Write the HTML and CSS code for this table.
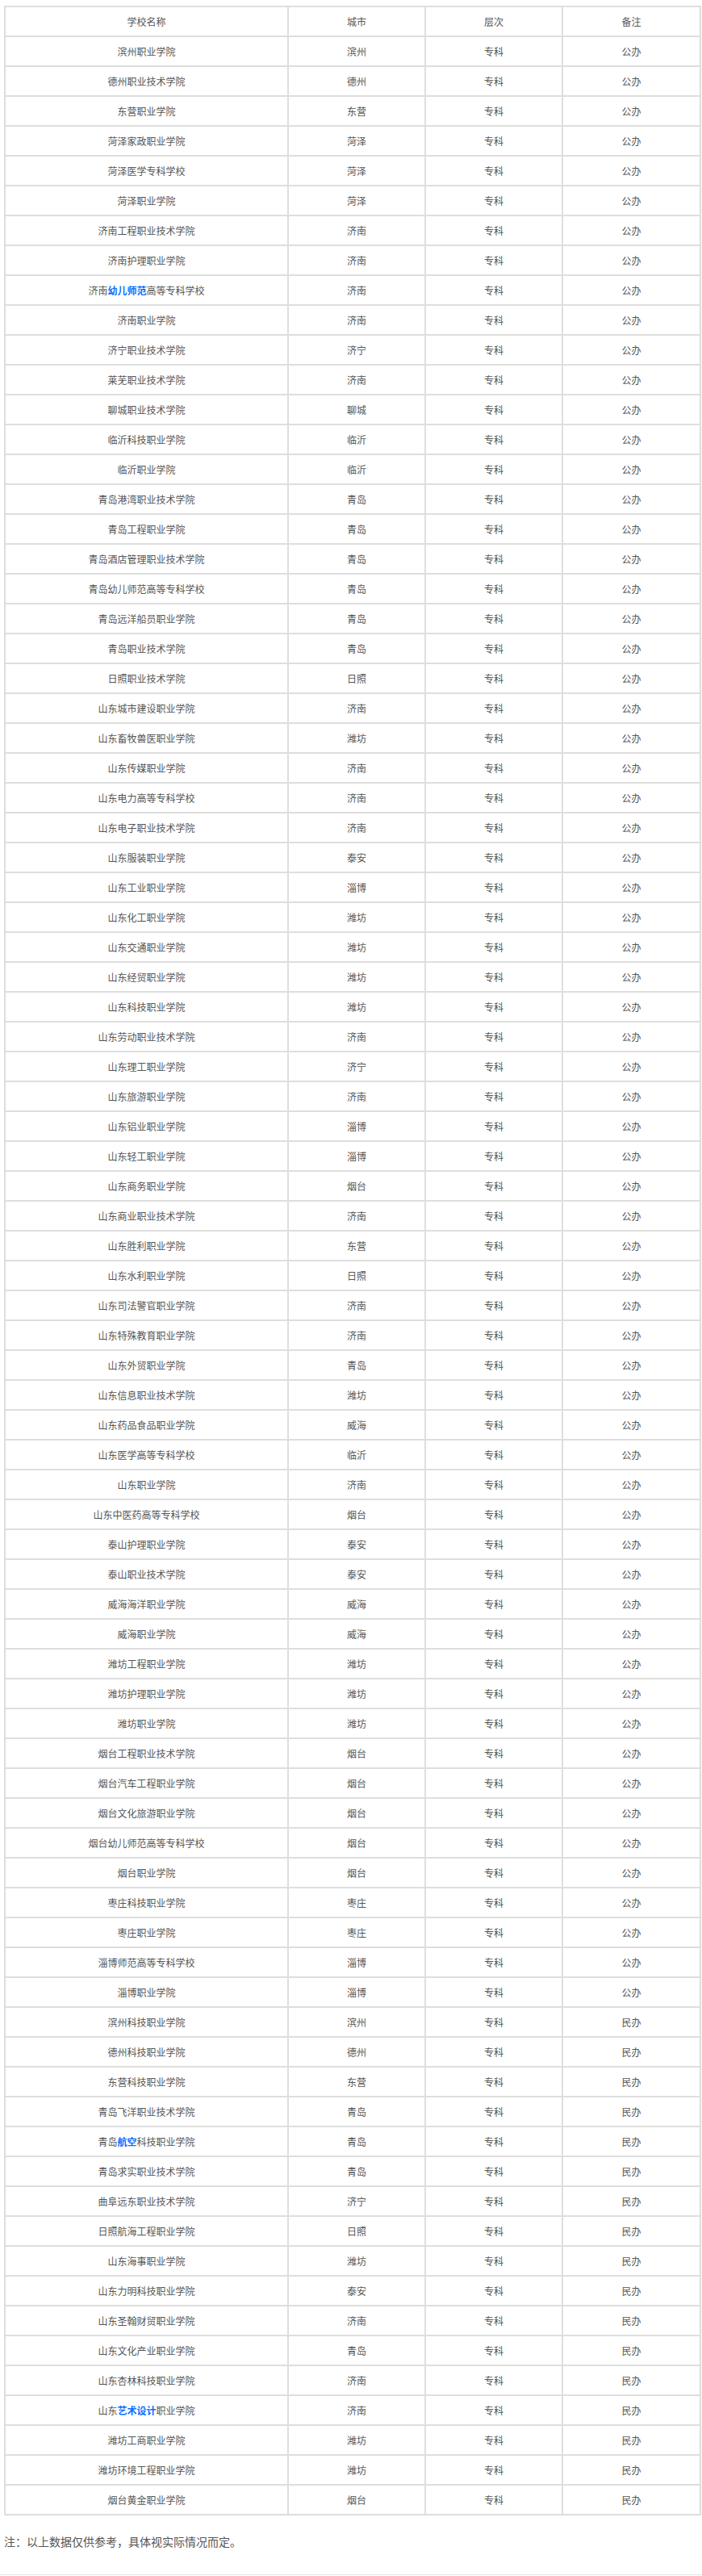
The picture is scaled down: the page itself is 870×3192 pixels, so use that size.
FILE: index.html
```html
<!DOCTYPE html>
<html lang="zh-CN">
<head>
<meta charset="utf-8">
<title>山东专科院校名单</title>
<link rel="stylesheet" href="styles.css">
</head>
<body>
<div class="article">
<table class="schools">
<colgroup><col class="c-name"><col class="c-city"><col class="c-level"><col class="c-note"></colgroup>
<tbody>
<tr><td>学校名称</td><td>城市</td><td>层次</td><td>备注</td></tr>
<tr><td>滨州职业学院</td><td>滨州</td><td>专科</td><td>公办</td></tr>
<tr><td>德州职业技术学院</td><td>德州</td><td>专科</td><td>公办</td></tr>
<tr><td>东营职业学院</td><td>东营</td><td>专科</td><td>公办</td></tr>
<tr><td>菏泽家政职业学院</td><td>菏泽</td><td>专科</td><td>公办</td></tr>
<tr><td>菏泽医学专科学校</td><td>菏泽</td><td>专科</td><td>公办</td></tr>
<tr><td>菏泽职业学院</td><td>菏泽</td><td>专科</td><td>公办</td></tr>
<tr><td>济南工程职业技术学院</td><td>济南</td><td>专科</td><td>公办</td></tr>
<tr><td>济南护理职业学院</td><td>济南</td><td>专科</td><td>公办</td></tr>
<tr><td>济南<a class="kw">幼儿师范</a>高等专科学校</td><td>济南</td><td>专科</td><td>公办</td></tr>
<tr><td>济南职业学院</td><td>济南</td><td>专科</td><td>公办</td></tr>
<tr><td>济宁职业技术学院</td><td>济宁</td><td>专科</td><td>公办</td></tr>
<tr><td>莱芜职业技术学院</td><td>济南</td><td>专科</td><td>公办</td></tr>
<tr><td>聊城职业技术学院</td><td>聊城</td><td>专科</td><td>公办</td></tr>
<tr><td>临沂科技职业学院</td><td>临沂</td><td>专科</td><td>公办</td></tr>
<tr><td>临沂职业学院</td><td>临沂</td><td>专科</td><td>公办</td></tr>
<tr><td>青岛港湾职业技术学院</td><td>青岛</td><td>专科</td><td>公办</td></tr>
<tr><td>青岛工程职业学院</td><td>青岛</td><td>专科</td><td>公办</td></tr>
<tr><td>青岛酒店管理职业技术学院</td><td>青岛</td><td>专科</td><td>公办</td></tr>
<tr><td>青岛幼儿师范高等专科学校</td><td>青岛</td><td>专科</td><td>公办</td></tr>
<tr><td>青岛远洋船员职业学院</td><td>青岛</td><td>专科</td><td>公办</td></tr>
<tr><td>青岛职业技术学院</td><td>青岛</td><td>专科</td><td>公办</td></tr>
<tr><td>日照职业技术学院</td><td>日照</td><td>专科</td><td>公办</td></tr>
<tr><td>山东城市建设职业学院</td><td>济南</td><td>专科</td><td>公办</td></tr>
<tr><td>山东畜牧兽医职业学院</td><td>潍坊</td><td>专科</td><td>公办</td></tr>
<tr><td>山东传媒职业学院</td><td>济南</td><td>专科</td><td>公办</td></tr>
<tr><td>山东电力高等专科学校</td><td>济南</td><td>专科</td><td>公办</td></tr>
<tr><td>山东电子职业技术学院</td><td>济南</td><td>专科</td><td>公办</td></tr>
<tr><td>山东服装职业学院</td><td>泰安</td><td>专科</td><td>公办</td></tr>
<tr><td>山东工业职业学院</td><td>淄博</td><td>专科</td><td>公办</td></tr>
<tr><td>山东化工职业学院</td><td>潍坊</td><td>专科</td><td>公办</td></tr>
<tr><td>山东交通职业学院</td><td>潍坊</td><td>专科</td><td>公办</td></tr>
<tr><td>山东经贸职业学院</td><td>潍坊</td><td>专科</td><td>公办</td></tr>
<tr><td>山东科技职业学院</td><td>潍坊</td><td>专科</td><td>公办</td></tr>
<tr><td>山东劳动职业技术学院</td><td>济南</td><td>专科</td><td>公办</td></tr>
<tr><td>山东理工职业学院</td><td>济宁</td><td>专科</td><td>公办</td></tr>
<tr><td>山东旅游职业学院</td><td>济南</td><td>专科</td><td>公办</td></tr>
<tr><td>山东铝业职业学院</td><td>淄博</td><td>专科</td><td>公办</td></tr>
<tr><td>山东轻工职业学院</td><td>淄博</td><td>专科</td><td>公办</td></tr>
<tr><td>山东商务职业学院</td><td>烟台</td><td>专科</td><td>公办</td></tr>
<tr><td>山东商业职业技术学院</td><td>济南</td><td>专科</td><td>公办</td></tr>
<tr><td>山东胜利职业学院</td><td>东营</td><td>专科</td><td>公办</td></tr>
<tr><td>山东水利职业学院</td><td>日照</td><td>专科</td><td>公办</td></tr>
<tr><td>山东司法警官职业学院</td><td>济南</td><td>专科</td><td>公办</td></tr>
<tr><td>山东特殊教育职业学院</td><td>济南</td><td>专科</td><td>公办</td></tr>
<tr><td>山东外贸职业学院</td><td>青岛</td><td>专科</td><td>公办</td></tr>
<tr><td>山东信息职业技术学院</td><td>潍坊</td><td>专科</td><td>公办</td></tr>
<tr><td>山东药品食品职业学院</td><td>威海</td><td>专科</td><td>公办</td></tr>
<tr><td>山东医学高等专科学校</td><td>临沂</td><td>专科</td><td>公办</td></tr>
<tr><td>山东职业学院</td><td>济南</td><td>专科</td><td>公办</td></tr>
<tr><td>山东中医药高等专科学校</td><td>烟台</td><td>专科</td><td>公办</td></tr>
<tr><td>泰山护理职业学院</td><td>泰安</td><td>专科</td><td>公办</td></tr>
<tr><td>泰山职业技术学院</td><td>泰安</td><td>专科</td><td>公办</td></tr>
<tr><td>威海海洋职业学院</td><td>威海</td><td>专科</td><td>公办</td></tr>
<tr><td>威海职业学院</td><td>威海</td><td>专科</td><td>公办</td></tr>
<tr><td>潍坊工程职业学院</td><td>潍坊</td><td>专科</td><td>公办</td></tr>
<tr><td>潍坊护理职业学院</td><td>潍坊</td><td>专科</td><td>公办</td></tr>
<tr><td>潍坊职业学院</td><td>潍坊</td><td>专科</td><td>公办</td></tr>
<tr><td>烟台工程职业技术学院</td><td>烟台</td><td>专科</td><td>公办</td></tr>
<tr><td>烟台汽车工程职业学院</td><td>烟台</td><td>专科</td><td>公办</td></tr>
<tr><td>烟台文化旅游职业学院</td><td>烟台</td><td>专科</td><td>公办</td></tr>
<tr><td>烟台幼儿师范高等专科学校</td><td>烟台</td><td>专科</td><td>公办</td></tr>
<tr><td>烟台职业学院</td><td>烟台</td><td>专科</td><td>公办</td></tr>
<tr><td>枣庄科技职业学院</td><td>枣庄</td><td>专科</td><td>公办</td></tr>
<tr><td>枣庄职业学院</td><td>枣庄</td><td>专科</td><td>公办</td></tr>
<tr><td>淄博师范高等专科学校</td><td>淄博</td><td>专科</td><td>公办</td></tr>
<tr><td>淄博职业学院</td><td>淄博</td><td>专科</td><td>公办</td></tr>
<tr><td>滨州科技职业学院</td><td>滨州</td><td>专科</td><td>民办</td></tr>
<tr><td>德州科技职业学院</td><td>德州</td><td>专科</td><td>民办</td></tr>
<tr><td>东营科技职业学院</td><td>东营</td><td>专科</td><td>民办</td></tr>
<tr><td>青岛飞洋职业技术学院</td><td>青岛</td><td>专科</td><td>民办</td></tr>
<tr><td>青岛<a class="kw">航空</a>科技职业学院</td><td>青岛</td><td>专科</td><td>民办</td></tr>
<tr><td>青岛求实职业技术学院</td><td>青岛</td><td>专科</td><td>民办</td></tr>
<tr><td>曲阜远东职业技术学院</td><td>济宁</td><td>专科</td><td>民办</td></tr>
<tr><td>日照航海工程职业学院</td><td>日照</td><td>专科</td><td>民办</td></tr>
<tr><td>山东海事职业学院</td><td>潍坊</td><td>专科</td><td>民办</td></tr>
<tr><td>山东力明科技职业学院</td><td>泰安</td><td>专科</td><td>民办</td></tr>
<tr><td>山东圣翰财贸职业学院</td><td>济南</td><td>专科</td><td>民办</td></tr>
<tr><td>山东文化产业职业学院</td><td>青岛</td><td>专科</td><td>民办</td></tr>
<tr><td>山东杏林科技职业学院</td><td>济南</td><td>专科</td><td>民办</td></tr>
<tr><td>山东<a class="kw">艺术设计</a>职业学院</td><td>济南</td><td>专科</td><td>民办</td></tr>
<tr><td>潍坊工商职业学院</td><td>潍坊</td><td>专科</td><td>民办</td></tr>
<tr><td>潍坊环境工程职业学院</td><td>潍坊</td><td>专科</td><td>民办</td></tr>
<tr><td>烟台黄金职业学院</td><td>烟台</td><td>专科</td><td>民办</td></tr>
</tbody>
</table>
<p class="note">注：以上数据仅供参考，具体视实际情况而定。</p>
<div class="rule"></div>
</div>
</body>
</html>
```
FILE: styles.css
```css
html, body {
  margin: 0;
  padding: 0;
  background: #fff;
}
body {
  font-family: "Microsoft YaHei", "Noto Sans CJK SC", "Noto Sans", sans-serif;
  color: #555;
}
.article {
  padding: 7px 3px 0 5px;
}
.schools {
  width: 862px;
  border-collapse: collapse;
  table-layout: fixed;
  font-size: 12px;
}
.c-name { width: 351px; }
.c-city { width: 170px; }
.c-level { width: 170px; }
.c-note { width: 171px; }
.schools td {
  border: 2px solid #dedede;
  height: 35px;
  padding: 0;
  line-height: 35px;
  text-align: center;
  color: #555;
  white-space: nowrap;
  box-sizing: content-box;
}
.kw {
  color: #0a6cff;
  font-weight: bold;
  text-decoration: none;
}
.note {
  margin: 20px 0 0 0;
  font-size: 14px;
line-height: 24px;
  color: #555;
}
.rule {
  margin-top: 29px;
  margin-left: -5px;
  margin-right: -3px;
  height: 0;
  border-top: 1px solid #e6e6e6;
}
```
